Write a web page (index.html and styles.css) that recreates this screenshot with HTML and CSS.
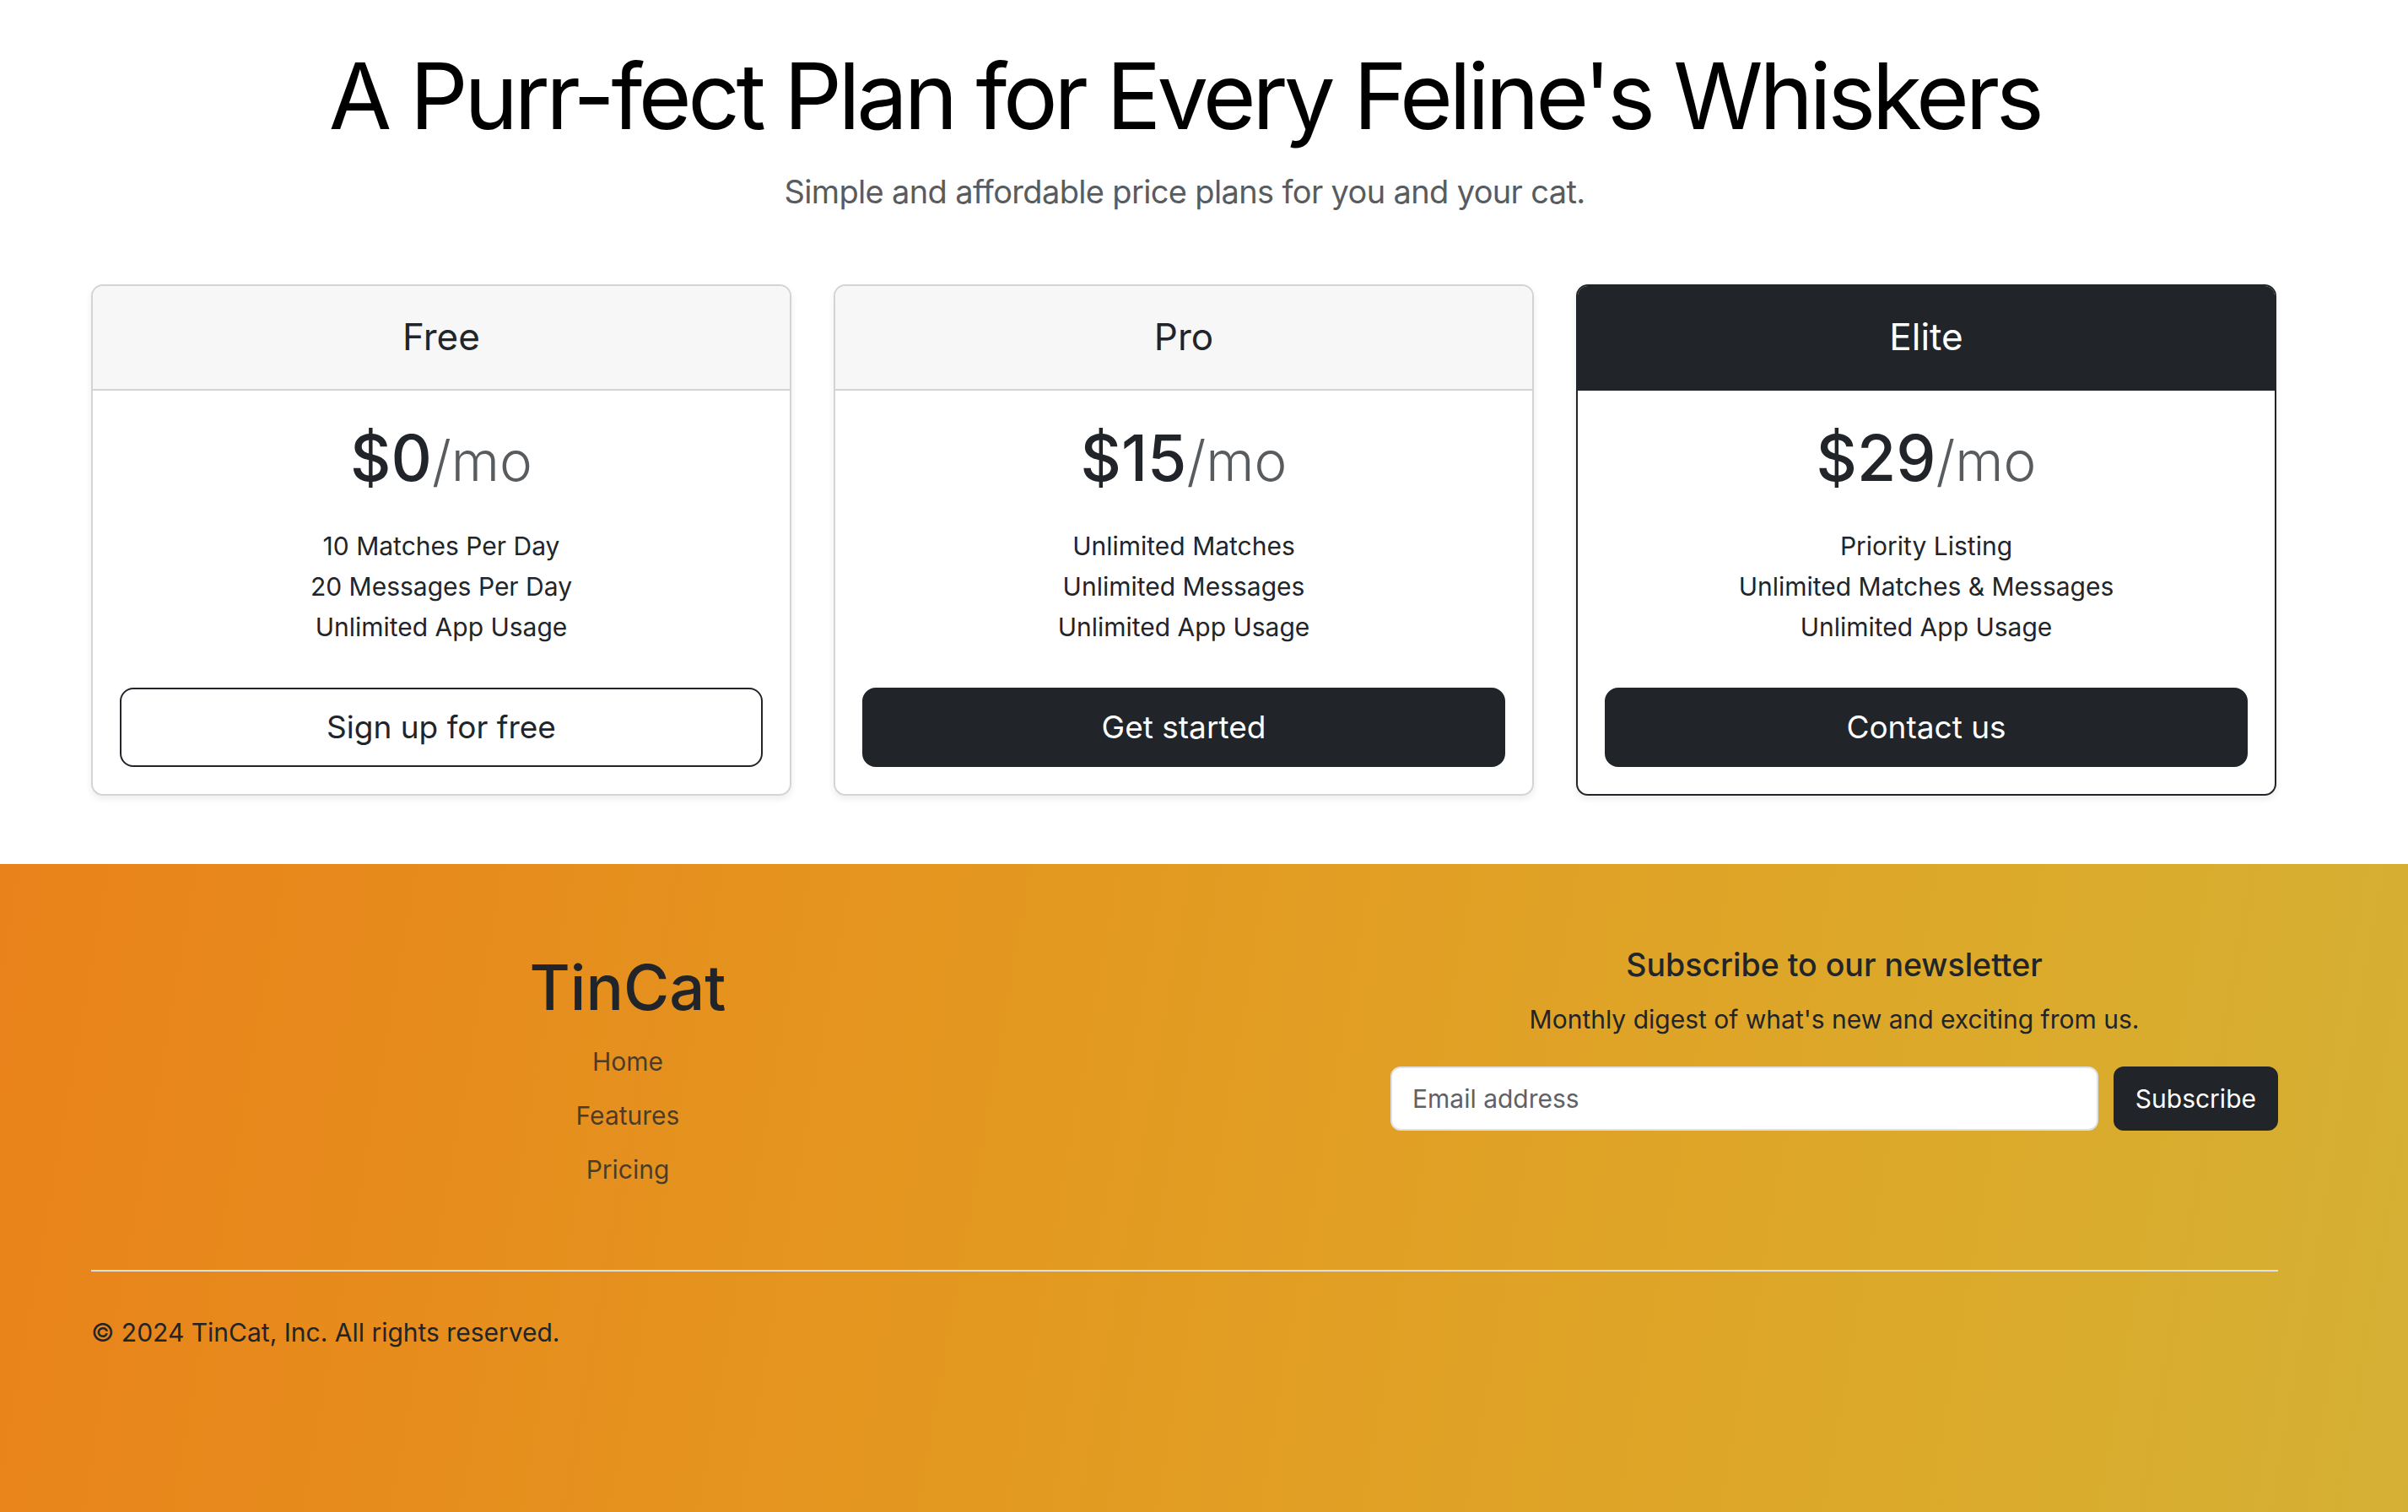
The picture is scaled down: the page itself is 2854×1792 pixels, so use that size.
FILE: index.html
```html
<!DOCTYPE html>
<html lang="en">
<head>
<meta charset="utf-8">
<title>TinCat Pricing</title>
<link rel="stylesheet" href="styles.css">
</head>
<body>
<main class="container">
  <header class="pricing-header">
    <h1 class="display">A Purr-fect Plan for Every Feline's Whiskers</h1>
    <p class="lead">Simple and affordable price plans for you and your cat.</p>
  </header>
  <div class="plans">
    <div class="card">
      <div class="card-header"><h4>Free</h4></div>
      <div class="card-body">
        <h1 class="price">$0<small>/mo</small></h1>
        <ul class="features">
          <li>10 Matches Per Day</li>
          <li>20 Messages Per Day</li>
          <li>Unlimited App Usage</li>
        </ul>
        <button class="btn btn-outline" type="button">Sign up for free</button>
      </div>
    </div>
    <div class="card">
      <div class="card-header"><h4>Pro</h4></div>
      <div class="card-body">
        <h1 class="price">$15<small>/mo</small></h1>
        <ul class="features">
          <li>Unlimited Matches</li>
          <li>Unlimited Messages</li>
          <li>Unlimited App Usage</li>
        </ul>
        <button class="btn btn-dark" type="button">Get started</button>
      </div>
    </div>
    <div class="card card-featured">
      <div class="card-header"><h4>Elite</h4></div>
      <div class="card-body">
        <h1 class="price">$29<small>/mo</small></h1>
        <ul class="features">
          <li>Priority Listing</li>
          <li>Unlimited Matches &amp; Messages</li>
          <li>Unlimited App Usage</li>
        </ul>
        <button class="btn btn-dark" type="button">Contact us</button>
      </div>
    </div>
  </div>
</main>
<footer class="footer">
  <div class="container">
    <div class="footer-row">
      <div class="brand-col">
        <h1 class="brand">TinCat</h1>
        <ul class="footer-nav">
          <li><a href="#">Home</a></li>
          <li><a href="#">Features</a></li>
          <li><a href="#">Pricing</a></li>
        </ul>
      </div>
      <div class="news-col">
        <h5>Subscribe to our newsletter</h5>
        <p>Monthly digest of what's new and exciting from us.</p>
        <form class="subscribe" onsubmit="return false">
          <input type="text" placeholder="Email address">
          <button class="btn-sub" type="button">Subscribe</button>
        </form>
      </div>
    </div>
    <div class="copyright">
      <p>© 2024 TinCat, Inc. All rights reserved.</p>
    </div>
  </div>
</footer>
</body>
</html>
```

FILE: styles.css
```css
* { box-sizing: border-box; }

html, body { margin: 0; padding: 0; }

body {
  font-family: "Inter", "Noto Sans", sans-serif;
  font-size: 30px;
  line-height: 48px;
  color: #212529;
  background: #fff;
  min-height: 100vh;
  display: flex;
  flex-direction: column;
}

.container {
  width: 2592px;
  margin-left: 108px;
}

.pricing-header {
  text-align: center;
  padding-top: 47px;
}

.display {
  margin: 0 0 16px;
  font-size: 108px;
  font-weight: 400;
  line-height: 134px;
  color: #000;
  letter-spacing: -4.5px;
}

.lead {
  margin: 0;
  font-size: 38px;
  line-height: 60px;
  letter-spacing: -0.65px;
  color: #595c5f;
}

.plans {
  display: grid;
  grid-template-columns: repeat(3, 830px);
  gap: 50px;
  margin-top: 80px;
}

.card {
  border: 2px solid #d3d4d5;
  border-radius: 14px;
  background: #fff;
  box-shadow: 0 4px 8px rgba(0, 0, 0, 0.075);
  overflow: hidden;
  text-align: center;
}

.card-header {
  background: #f7f7f7;
  border-bottom: 2px solid #d3d4d5;
  padding: 32px;
}

.card-header h4 {
  margin: 0;
  font-size: 44px;
  font-weight: 400;
  line-height: 57.6px;
}

.card-featured { border-color: #212529; }

.card-featured .card-header {
  background: #212529;
  color: #fff;
  border-bottom-color: #212529;
}

.card-body { padding: 32px; }

.price {
  margin: 0;
  font-size: 75px;
  font-weight: 500;
  line-height: 1.28;
}

.price small {
  font-size: 0.875em;
  font-weight: 300;
  color: #595c5f;
}

.features {
  list-style: none;
  margin: 32px 0 48px;
  padding: 0;
}

.btn {
  display: block;
  width: 100%;
  font-family: inherit;
  font-size: 37px;
  line-height: 60px;
  padding: 15px 32px;
  border: 2px solid #212529;
  border-radius: 16px;
}

.btn-outline { background: transparent; color: #212529; }

.btn-dark { background: #212529; color: #fff; }

.footer {
  flex: 1;
  margin-top: 81px;
  padding-top: 96px;
  background: linear-gradient(100deg, #e9821a 0%, #e39a21 45%, #dcaa2b 80%, #d4b034 100%);
}

.footer-row { display: flex; }

.brand-col {
  width: 1272px;
  text-align: center;
}

.brand {
  margin: 2px 0 16px;
  font-size: 74px;
  font-weight: 500;
  line-height: 96px;
}

.footer-nav {
  list-style: none;
  margin: 0;
  padding: 0;
}

.footer-nav li { margin-bottom: 16px; }

.footer-nav a {
  color: rgba(33, 37, 41, 0.78);
  text-decoration: none;
}

.news-col {
  width: 1052px;
  margin-left: 268px;
  text-align: center;
}

.news-col h5 {
  margin: 0 0 16px;
  font-size: 37.5px;
  font-weight: 500;
  line-height: 48px;
}

.news-col p { margin: 0 0 32px; }

.subscribe {
  display: flex;
  gap: 18px;
}

.subscribe input {
  flex: 1;
  height: 76px;
  padding: 12px 24px;
  font-family: inherit;
  font-size: 30px;
  color: #212529;
  background: #fff;
  border: 2px solid #dee2e6;
  border-radius: 12px;
}

.subscribe input::placeholder { color: #5f6265; }

.btn-sub {
  height: 76px;
  padding: 12px 24px;
  font-family: inherit;
  font-size: 30px;
  color: #fff;
  background: #212529;
  border: 2px solid #212529;
  border-radius: 12px;
}

.copyright {
  margin-top: 79px;
  border-top: 2px solid #e2e2e2;
  padding: 48px 0;
}

.copyright p { margin: 0; }
```
